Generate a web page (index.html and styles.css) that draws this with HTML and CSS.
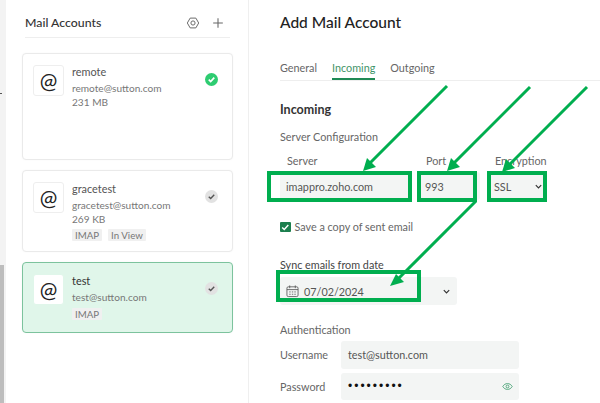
FILE: index.html
```html
<!DOCTYPE html>
<html lang="en">
<head>
<meta charset="utf-8">
<title>Add Mail Account</title>
<link rel="stylesheet" href="styles.css">
</head>
<body>
<div class="page">
  <div class="gutter"><span class="tick"></span><div class="thumb"></div></div>
  <aside class="sidebar">
    <header class="side-head">
      <h2>Mail Accounts</h2>
      <svg class="ico gear" viewBox="0 0 16 16"><path d="M1.500 8l3.250-5.600h6.500L14.500 8l-3.250 5.600h-6.500z"/><circle cx="8" cy="8" r="2.400"/></svg>
      <svg class="ico plus" viewBox="0 0 16 16"><path d="M8 2.500v11M2.500 8h11"/></svg>
    </header>
    <article class="card card-tall">
      <div class="at">@</div>
      <div class="info"><div class="name">remote</div><div class="sub">remote@sutton.com</div><div class="sub">231 MB</div></div>
      <span class="badge on"><svg viewBox="0 0 12 12"><path d="M3 6.200l2.100 2L9 4"/></svg></span>
    </article>
    <article class="card card-mid">
      <div class="at">@</div>
      <div class="info"><div class="name">gracetest</div><div class="sub">gracetest@sutton.com</div><div class="sub">269 KB</div><div class="tags"><span class="tag">IMAP</span><span class="tag">In View</span></div></div>
      <span class="badge"><svg viewBox="0 0 12 12"><path d="M3 6.200l2.100 2L9 4"/></svg></span>
    </article>
    <article class="card active">
      <div class="at">@</div>
      <div class="info"><div class="name">test</div><div class="sub">test@sutton.com</div><div class="tags"><span class="tag">IMAP</span></div></div>
      <span class="badge"><svg viewBox="0 0 12 12"><path d="M3 6.200l2.100 2L9 4"/></svg></span>
    </article>
  </aside>
  <main class="main">
    <h1>Add Mail Account</h1>
    <nav class="tabs"><span>General</span><span class="cur">Incoming</span><span>Outgoing</span></nav>
    <h3>Incoming</h3>
    <div class="label">Server Configuration</div>
    <div class="server-row">
      <div class="col c-server"><label>Server</label><div class="field">imappro.zoho.com</div></div>
      <div class="col c-port"><label>Port</label><div class="field">993</div></div>
      <div class="col c-enc"><label>Encryption</label><div class="field sel">SSL<svg class="chev" viewBox="0 0 10 10"><path d="M2 3.500l3 3 3-3"/></svg></div></div>
    </div>
    <div class="check"><span class="box"><svg viewBox="0 0 12 12"><path d="M2.500 6.200l2.400 2.400L9.500 3.500"/></svg></span>Save a copy of sent email</div>
    <div class="label sync">Sync emails from date</div>
    <div class="field date">
      <svg class="cal" viewBox="0 0 14 14"><rect x="1" y="2.500" width="12" height="10.500" rx="1.500"/><path d="M1 5.500h12M4 1v3M10 1v3M3.500 8h1.500M6.300 8h1.500M9 8h1.500M3.500 10.500h1.500M6.300 10.500h1.500M9 10.500h1.500"/></svg>
      <span>07/02/2024</span>
      <svg class="chev" viewBox="0 0 10 10"><path d="M2 3.500l3 3 3-3"/></svg>
    </div>
    <div class="label auth">Authentication</div>
    <div class="auth-row"><label>Username</label><div class="field wide">test@sutton.com</div></div>
    <div class="auth-row"><label>Password</label><div class="field wide pass"><span class="dots">•••••••••</span><svg class="eye" viewBox="0 0 14 14"><path d="M1 7c1.500-2.500 3.500-3.700 6-3.700S11.500 4.500 13 7c-1.500 2.500-3.500 3.700-6 3.700S2.500 9.500 1 7z"/><circle cx="7" cy="7" r="1.800"/></svg></div></div>
  </main>
  <svg class="overlay" viewBox="0 0 600 403">
    <g class="boxes">
      <rect x="269" y="173" width="141" height="27"/>
      <rect x="419" y="173" width="56" height="27"/>
      <rect x="489" y="173" width="56" height="27"/>
      <rect x="278" y="272" width="141" height="28"/>
    </g>
    <g class="lines">
      <path d="M447 86L370 163"/>
      <path d="M530 87L454 163"/>
      <path d="M587 87L509 165"/>
      <path d="M476 201L397 280"/>
    </g>
    <g class="heads">
      <path d="M363 171l4-13 9 9z"/>
      <path d="M447 171l4-13 9 9z"/>
      <path d="M502 172l4-13 9 9z"/>
      <path d="M390 286l6-12 8 8z"/>
    </g>
  </svg>
</div>
</body>
</html>
```
FILE: styles.css
```css
* { box-sizing: border-box; }
html, body { margin: 0; height: 100%; }
body { font-family: Lato, "Open Sans", sans-serif; color: #555; background: #fff; overflow: hidden; }
.page { position: relative; width: 600px; height: 403px; display: flex; overflow: hidden; }
.gutter { position: relative; width: 6px; flex: none; background: #f3f3f3; display: flex; align-items: flex-end; }
.tick { position: absolute; left: 0; top: 93px; width: 2px; height: 1px; background: #555; }
.thumb { width: 4px; height: 138px; background: #bdbdbd; }
.sidebar { width: 243px; flex: none; padding: 0 15px 0 16px; border-right: 1px solid #efefef; }
.side-head { height: 38px; margin: 0 3px 15px 3px; display: flex; align-items: center; border-bottom: 1px solid #eee; padding-top: 8px; padding-right: 5px; gap: 11px; }
.side-head h2 { margin: 0 auto 0 0; font-size: 12.300px; font-weight: 500; color: #333; }
.ico { width: 14px; height: 14px; fill: none; stroke: #666; stroke-width: 1.100; stroke-linejoin: round; }
.plus { stroke-width: 1.200; }
.card { display: flex; border: 1px solid #eaeaea; border-radius: 4px; padding: 11px 14px 8px 10px; margin-bottom: 10px; gap: 8px; background: #fff; box-shadow: 0 0 2px rgba(0,0,0,.04); }
.card-tall { height: 107px; }
.card-mid { height: 82px; }
.card.active { background: #e0f6ea; border-color: #7cc39d; height: 71px; }
.at { width: 31px; height: 31px; flex: none; display: flex; align-items: center; justify-content: center; background: #fff; border: 1px solid #eee; border-radius: 3px; font-size: 21px; color: #222; line-height: 1; }
.active .at { border-color: #e0f6ea; }
.info { flex: 1; min-width: 0; }
.name { font-size: 10.900px; line-height: 14px; color: #555; margin-bottom: 3px; }
.active .name { color: #333; }
.sub { font-size: 10.100px; line-height: 13.500px; color: #777; }
.tags { display: flex; gap: 6px; margin-top: 3px; }
.tag { font-size: 9.700px; line-height: 12px; padding: 0 3px; background: #f0f0f0; color: #777; border-radius: 1px; }
.badge { width: 13px; height: 13px; flex: none; border-radius: 50%; background: #e2e2e2; margin-top: 8px; display: flex; align-items: center; justify-content: center; }
.badge svg { width: 11px; height: 11px; fill: none; stroke: #555; stroke-width: 1.500; }
.badge.on { background: #2ecc71; }
.badge.on svg { stroke: #fff; stroke-width: 1.800; }
.main { flex: 1; padding: 12px 0 0 31px; min-width: 0; }
h1 { margin: 0 0 24px; font-size: 15.500px; line-height: 20px; font-weight: 500; color: #222; }
.tabs { display: flex; gap: 15px; font-size: 10.800px; line-height: 14px; height: 25px; border-bottom: 1px solid #eee; color: #666; padding-top: 5px; }
.tabs .cur { color: #3f9468; border-bottom: 2px solid #1f8a55; height: 19px; }
h3 { margin: 21px 0 13px; font-size: 12.500px; line-height: 15px; font-weight: 700; color: #333; }
.label { font-size: 10.800px; line-height: 14px; color: #666; }
.server-row { display: flex; gap: 8px; margin-top: 10px; }
.col label { display: block; font-size: 10.800px; line-height: 14px; color: #666; padding-left: 7px; margin-bottom: 4px; }
.field { height: 28px; background: #f3f5f4; border-radius: 3px; font-size: 10.800px; color: #555; display: flex; align-items: center; padding: 0 6px; }
.c-server { width: 131px; }
.c-port { width: 61px; }
.c-enc { width: 58px; }
.c-enc .field { padding-right: 3.500px; }
.chev { width: 9px; height: 9px; fill: none; stroke: #333; stroke-width: 1.300; margin-left: auto; }
.check { display: flex; align-items: center; gap: 4px; font-size: 10.800px; line-height: 14px; color: #666; margin-top: 20px; }
.box { width: 10.500px; height: 10.500px; background: #1c7f4e; border-radius: 1px; display: flex; }
.box svg { width: 10.500px; height: 10.500px; fill: none; stroke: #fff; stroke-width: 1.700; }
.label.sync { margin-top: 24px; color: #444; }
.date { width: 177px; margin-top: 5px; gap: 5px; padding-right: 6.500px; }
.cal { width: 13px; height: 14px; fill: none; stroke: #555; stroke-width: .9; flex: none; }
.label.auth { margin-top: 18px; }
.auth-row { display: flex; align-items: center; margin-top: 4px; }
.auth-row label { width: 61px; font-size: 10.800px; color: #666; }
.wide { width: 178px; height: 27.500px; padding-left: 7px; }
.pass { justify-content: space-between; padding-right: 6px; }
.dots { font-family: "Liberation Sans", sans-serif; color: #111; font-size: 12px; letter-spacing: 2px; }
.eye { width: 11px; height: 11px; fill: none; stroke: #4fa67a; stroke-width: 1.200; }
.overlay { position: absolute; left: 0; top: 0; width: 600px; height: 403px; pointer-events: none; }
.boxes rect { fill: none; stroke: #00ae4f; stroke-width: 4; }
.lines path { fill: none; stroke: #00ae4f; stroke-width: 3; }
.heads path { fill: #00ae4f; }
```
